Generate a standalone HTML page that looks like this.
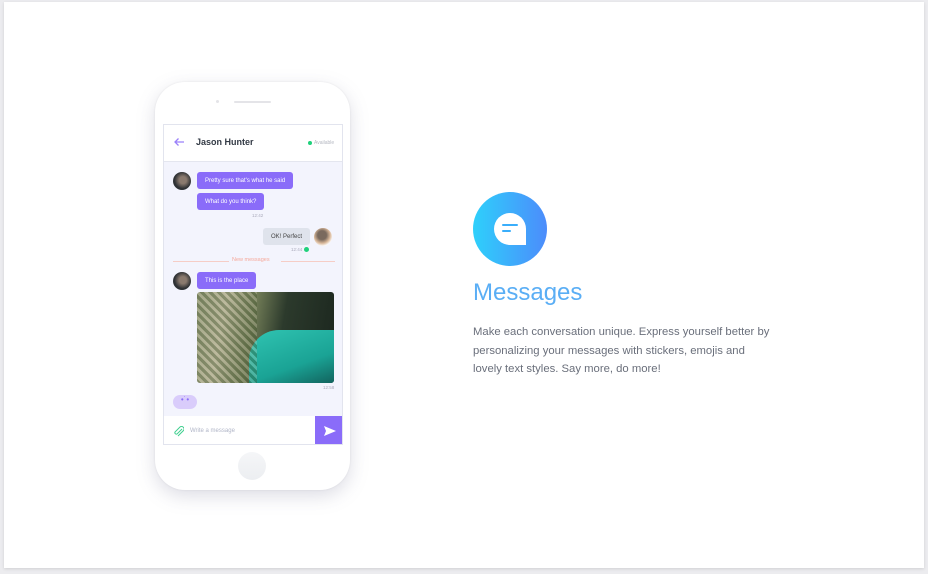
<!DOCTYPE html>
<html><head><style>
body{margin:0;width:928px;height:574px;background:#ececef;font-family:"Liberation Sans",sans-serif;position:relative;overflow:hidden}
.card{position:absolute;left:4px;top:2px;width:920px;height:566px;background:#fff;box-shadow:0 1px 3px rgba(0,0,0,.12)}
.phone{position:absolute;left:155px;top:82px;width:195px;height:408px;border-radius:30px;background:#fff;box-shadow:0 6px 18px rgba(120,120,150,.25),0 0 2px rgba(0,0,0,.08)}
.screen{position:absolute;left:163px;top:124px;width:180px;height:321px;background:#f3f4fd;border:1px solid #e2e4ee;box-sizing:border-box;overflow:hidden}
.hdr{position:absolute;left:0;top:0;width:100%;height:36px;background:#fff;border-bottom:1px solid #e4e6ef}
.b{position:absolute;background:#8a6cf9;color:#fff;font-size:6px;border-radius:3px;height:17px;line-height:18px;padding:0 8px;white-space:nowrap}
.av{position:absolute;width:18px;height:18px;border-radius:50%;background:radial-gradient(circle at 55% 45%,#8a7a6e 0 25%,#2e3134 60%)}
.t{position:absolute;font-size:4.5px;color:#aab}
</style></head><body>
<div class="card"></div>
<div class="phone"></div>
<div style="position:absolute;left:216px;top:100px;width:3px;height:3px;border-radius:50%;background:#e4e4e8"></div>
<div style="position:absolute;left:234px;top:101px;width:37px;height:2px;border-radius:1px;background:#e4e4e8"></div>
<div style="position:absolute;left:238px;top:452px;width:28px;height:28px;border-radius:50%;background:linear-gradient(#f5f6f8,#eceef1)"></div>
<div class="screen">
 <div class="hdr">
  <svg style="position:absolute;left:9px;top:12px" width="12" height="10" viewBox="0 0 12 10"><path d="M11 5H2M5.5 1.5L2 5l3.5 3.5" stroke="#9a80fa" stroke-width="1.3" fill="none"/></svg>
  <div style="position:absolute;left:32px;top:12px;font-size:9px;color:#333a45;font-weight:bold">Jason Hunter</div>
  <div style="position:absolute;left:144px;top:16px;width:4px;height:4px;border-radius:50%;background:#1fd17b"></div>
  <div style="position:absolute;left:150px;top:15px;font-size:5px;color:#b5b8c2">Available</div>
 </div>
 <div class="av" style="left:9px;top:47px"></div>
 <div class="b" style="left:33px;top:47px">Pretty sure that's what he said</div>
 <div class="b" style="left:33px;top:68px">What do you think?</div>
 <div class="t" style="left:88px;top:88px">12:42</div>
 <div class="b" style="left:99px;top:103px;background:#dfe3ec;color:#444">OK! Perfect</div>
 <div style="position:absolute;left:150px;top:103px;width:18px;height:18px;border-radius:50%;background:radial-gradient(circle at 45% 40%,#7a6a5e 0 30%,#d9b89a 55%,#fff 75%)"></div>
 <div class="t" style="left:127px;top:122px">12:44</div>
 <div style="position:absolute;left:140px;top:122px;width:5px;height:5px;border-radius:50%;background:#1fd17b"></div>
 <div style="position:absolute;left:9px;top:136px;width:56px;height:1px;background:#f6cdc6"></div>
 <div style="position:absolute;left:68px;top:132px;font-size:5.5px;color:#f5a89a">New messages</div>
 <div style="position:absolute;left:117px;top:136px;width:54px;height:1px;background:#f6cdc6"></div>
 <div class="av" style="left:9px;top:147px"></div>
 <div class="b" style="left:33px;top:147px">This is the place</div>
 <div style="position:absolute;left:33px;top:167px;width:137px;height:91px;border-radius:3px;overflow:hidden;background:linear-gradient(100deg,#8f9675 0%,#b2b093 20%,#6f7a55 40%,#2c3a2c 60%,#1b261e 100%)">
  <div style="position:absolute;left:52px;top:38px;width:100px;height:60px;border-radius:30px 0 0 0;background:linear-gradient(160deg,#30c4b2,#1aa395 55%,#0f4a48)"></div>
  <div style="position:absolute;left:0;top:0;width:60px;height:91px;background:repeating-linear-gradient(45deg,rgba(60,80,40,.35) 0 3px,rgba(220,215,190,.25) 3px 6px)"></div>
 </div>
 <div class="t" style="left:159px;top:260px">12:58</div>
 <div style="position:absolute;left:9px;top:270px;width:24px;height:14px;border-radius:7px;background:#d9ccfb;color:#8a6cf9;font-size:8px;text-align:center;line-height:10px">•˙•</div>
 <div style="position:absolute;left:0;top:291px;width:100%;height:30px;background:#fff"></div>
 <svg style="position:absolute;left:9px;top:301px" width="11" height="11" viewBox="0 0 11 11"><path d="M9 3L4 8a1.5 1.5 0 01-2-2l5-5a2.5 2.5 0 013.5 3.5L5 10" stroke="#3ecf8e" stroke-width="1" fill="none"/></svg>
 <div style="position:absolute;left:26px;top:303px;font-size:6px;color:#b0b5c7">Write a message</div>
 <div style="position:absolute;left:151px;top:291px;width:29px;height:30px;background:#8a6cf9"></div>
 <svg style="position:absolute;left:160px;top:301px" width="12" height="10" viewBox="0 0 12 10"><path d="M0 0L12 5L0 10L2 5Z" fill="#fff"/></svg>
</div>
<div style="position:absolute;left:473px;top:192px;width:74px;height:74px;border-radius:50%;background:linear-gradient(90deg,#2ed0fb,#4c8cfb)"></div>
<div style="position:absolute;left:494px;top:213px;width:32px;height:32px;background:#fff;border-radius:16px 16px 0 16px"></div>
<div style="position:absolute;left:502px;top:224px;width:16px;height:2px;background:#3aaefb;border-radius:1px"></div>
<div style="position:absolute;left:502px;top:230px;width:9px;height:2px;background:#3aaefb;border-radius:1px"></div>
<div style="position:absolute;left:473px;top:279px;font-size:24px;color:#5aaef5;font-weight:300">Messages</div>
<div style="position:absolute;left:473px;top:323px;white-space:nowrap;font-size:11.3px;line-height:18.6px;color:#6a6f7b">Make each conversation unique. Express yourself better by<br>personalizing your messages with stickers, emojis and<br>lovely text styles. Say more, do more!</div>
</body></html>
